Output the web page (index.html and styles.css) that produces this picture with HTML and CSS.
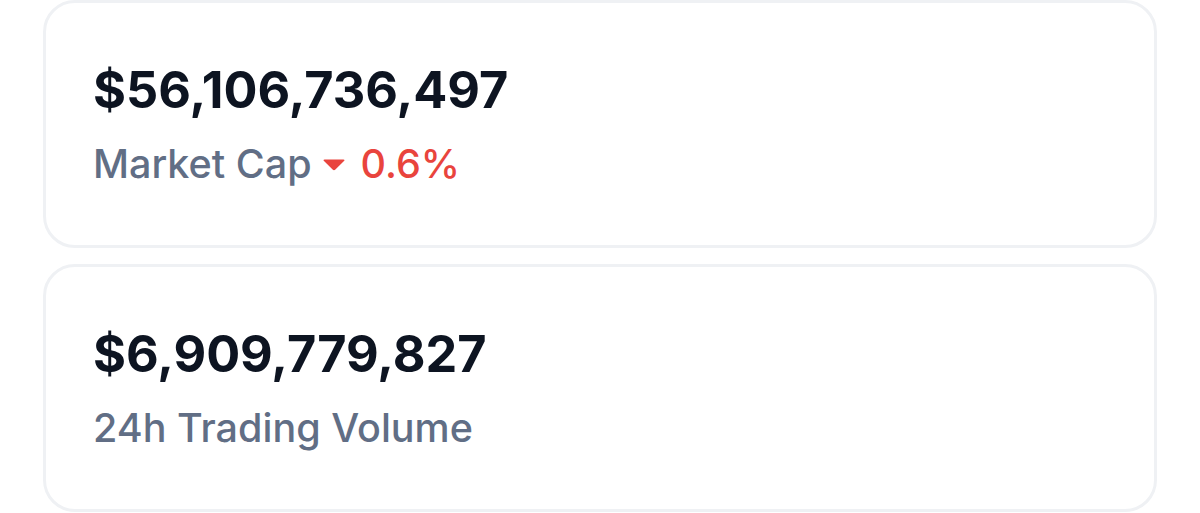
FILE: index.html
```html
<!DOCTYPE html>
<html>
<head>
<meta charset="utf-8">
<link rel="stylesheet" href="styles.css">
</head>
<body>
<div class="stats">
  <div class="card">
    <div class="value">$56,106,736,497</div>
    <div class="label">Market Cap
      <span class="change down"><svg class="caret" viewBox="0 0 24 12" width="24" height="12"><path d="M2.5 0.5 H21.5 Q23.5 0.5 22 2 L13.4 10.6 Q12 12 10.6 10.6 L2 2 Q0.5 0.5 2.5 0.5 Z" fill="#e9443d"/></svg>0.6%</span>
    </div>
  </div>
  <div class="card">
    <div class="value">$6,909,779,827</div>
    <div class="label">24h Trading Volume</div>
  </div>
</div>
</body>
</html>
```

FILE: styles.css
```css
html, body {
  margin: 0;
  padding: 0;
  background: #ffffff;
}
body {
  font-family: Inter, "Noto Sans", sans-serif;
}
.stats {
  display: flex;
  flex-direction: column;
  gap: 16px;
  padding: 0 43px;
}
.card {
  border: 3px solid #eff1f4;
  border-radius: 32px;
  padding: 57px 47px 0;
  height: 248px;
  box-sizing: border-box;
}
.value {
  font-size: 50.4px;
  font-weight: 700;
  color: #0d1421;
  line-height: 60px;
}
.label {
  margin-top: 20px;
  font-size: 39.5px;
  font-weight: 550;
  color: #616e85;
  line-height: 48px;
  display: flex;
  align-items: center;
}
.change {
  display: inline-flex;
  align-items: center;
  margin-left: 10px;
  color: #e9443d;
}
.caret {
  margin-right: 15px;
  margin-top: 2px;
}
```
